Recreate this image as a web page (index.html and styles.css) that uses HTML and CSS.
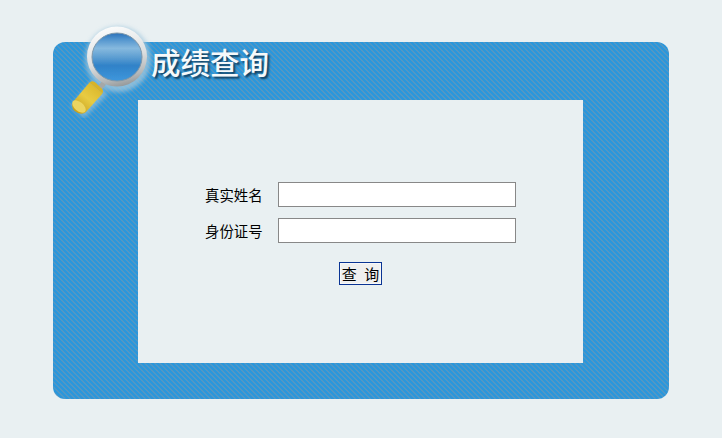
FILE: index.html
```html
<!DOCTYPE html>
<html lang="zh">
<head>
<meta charset="utf-8">
<title>成绩查询</title>
<link rel="stylesheet" href="styles.css">
</head>
<body>
<div class="panel">
  <svg class="magnifier" width="90" height="96" viewBox="0 0 90 96" aria-hidden="true">
    <defs>
      <linearGradient id="ring" x1="0.35" y1="0" x2="0.6" y2="1">
        <stop offset="0" stop-color="#fbfcfc"/>
        <stop offset="0.55" stop-color="#dcdedf"/>
        <stop offset="0.85" stop-color="#b4b7b8"/>
        <stop offset="1" stop-color="#94989a"/>
      </linearGradient>
      <linearGradient id="lens" x1="0.5" y1="0" x2="0.5" y2="1">
        <stop offset="0" stop-color="#2a70b8"/>
        <stop offset="0.12" stop-color="#4f92cd"/>
        <stop offset="0.32" stop-color="#86b9de"/>
        <stop offset="0.5" stop-color="#5f9fd2"/>
        <stop offset="0.68" stop-color="#3082c8"/>
        <stop offset="1" stop-color="#3f97dc"/>
      </linearGradient>
      <linearGradient id="handle" x1="0.9" y1="0" x2="0.1" y2="1">
        <stop offset="0" stop-color="#d8b326"/>
        <stop offset="0.5" stop-color="#e8cb42"/>
        <stop offset="1" stop-color="#c29a18"/>
      </linearGradient>
      <filter id="soft" x="-20%" y="-20%" width="140%" height="140%"><feGaussianBlur stdDeviation="2"/></filter>
      <filter id="soft2" x="-20%" y="-20%" width="140%" height="140%"><feGaussianBlur stdDeviation="0.6"/></filter>
    </defs>
    <ellipse cx="50" cy="37" rx="33" ry="33" fill="#a4c9de" opacity="0.75" filter="url(#soft)"/>
    <path d="M3 84 L24 58 L40 72 L16 96 Z" fill="#a4c9de" opacity="0.6" filter="url(#soft)"/>
    <g filter="url(#soft2)">
      <path d="M36 61 L29 69" stroke="#a5a8a8" stroke-width="5" fill="none"/>
      <path d="M34.5 71.5 L21.5 60.5 Q25 58 28 61 L33 66 Q36 68 34.5 71.5 Z" fill="#d8b326"/>
      <path d="M34.5 71.5 L21.5 60.5 L5 80 Q2 88 10 91 Q15 93 18 90 Z" fill="url(#handle)"/>
      <ellipse cx="11" cy="84.5" rx="8" ry="4.5" transform="rotate(40 11 84.5)" fill="#ecd560"/>
      <ellipse cx="49" cy="34.5" rx="30" ry="30" fill="url(#ring)"/>
      <ellipse cx="49" cy="35" rx="25" ry="24" fill="url(#lens)" stroke="#7d97aa" stroke-width="1"/>
    </g>
  </svg>
  <h1 class="title">成绩查询</h1>
  <form class="card">
    <div class="row">
      <label class="label" for="name">真实姓名</label>
      <input class="field" id="name" type="text">
    </div>
    <div class="row">
      <label class="label" for="id">身份证号</label>
      <input class="field" id="id" type="text">
    </div>
    <div class="actions">
      <button class="submit" type="button">查 询</button>
    </div>
  </form>
</div>
</body>
</html>
```
FILE: styles.css
```css
html, body { margin: 0; padding: 0; }
body {
  width: 722px;
  height: 438px;
  overflow: hidden;
  background: #e9f0f2;
  font-family: "Noto Sans CJK SC", "Liberation Sans", sans-serif;
  padding-top: 42px;
  box-sizing: border-box;
}
.panel {
  position: relative;
  box-sizing: border-box;
  width: 616px;
  height: 357px;
  margin-left: 53px;
  padding: 58px 86px 36px 85px;
  border-radius: 12px;
  background-color: #3498d4;
  background-image: linear-gradient(45deg, #5297c4 0, #5297c4 14%, #2a97dc 14%, #2a97dc 50%, #5297c4 50%, #5297c4 64%, #2a97dc 64%, #2a97dc 100%);
  background-size: 5px 5px;
}
.magnifier { position: absolute; left: 15px; top: -20px; }
.title {
  position: absolute;
  left: 98px;
  top: -2px;
  margin: 0;
  font-size: 29.5px;
  line-height: 42px;
  font-weight: 500;
  color: #f6f9fa;
  text-shadow: 2px 2px 2px #123f5e;
}
.card {
  box-sizing: border-box;
  height: 263px;
  width: 445px;
  padding-top: 82px;
  background: #e9f0f2;
  display: flex;
  flex-direction: column;
  gap: 11px;
}
.row { display: flex; align-items: center; padding-left: 67px; gap: 16px; }
.label { font-size: 14.4px; line-height: 24px; width: 57px; color: #000; white-space: nowrap; }
.field {
  box-sizing: border-box;
  width: 238px;
  height: 25px;
  border: 1px solid #888;
  background: #fff;
  padding: 0;
}
.actions { display: flex; padding: 8px 0 0 201px; }
.submit {
  box-sizing: border-box;
  width: 43px;
  height: 23px;
  padding: 0 0 1px;
  border: 1px solid #0a3494;
  box-shadow: inset 0 0 0 1px #f8f8f8;
  background: #efefef;
  color: #000;
  font: 15px/1 "Noto Sans CJK SC", sans-serif;
  word-spacing: 4px;
  white-space: nowrap;
}
```
